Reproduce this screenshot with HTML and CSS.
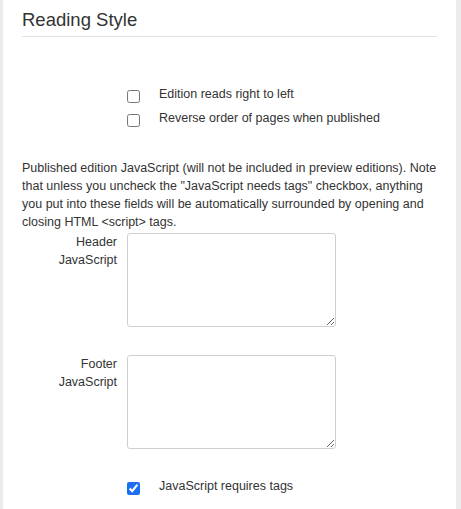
FILE: index.html
```html
<!DOCTYPE html>
<html>
<head>
<meta charset="utf-8">
<link rel="stylesheet" href="styles.css">
</head>
<body>
<div class="panel">
  <h3 class="title">Reading Style</h3>
  <div class="checks">
    <div class="check-row"><input type="checkbox" class="cb"><label class="cb-label">Edition reads right to left</label></div>
    <div class="check-row"><input type="checkbox" class="cb"><label class="cb-label">Reverse order of pages when published</label></div>
  </div>
  <p class="note">Published edition JavaScript (will not be included in preview editions). Note that unless you uncheck the "JavaScript needs tags" checkbox, anything you put into these fields will be automatically surrounded by opening and closing HTML &lt;script&gt; tags.</p>
  <div class="field">
    <label class="field-label">Header JavaScript</label>
    <textarea class="ta"></textarea>
  </div>
  <div class="field field-footer">
    <label class="field-label">Footer JavaScript</label>
    <textarea class="ta"></textarea>
  </div>
  <div class="checks checks-last">
    <div class="check-row"><input type="checkbox" class="cb" checked><label class="cb-label">JavaScript requires tags</label></div>
  </div>
</div>
</body>
</html>
```
FILE: styles.css
```css
html, body {
  margin: 0;
  padding: 0;
}
body {
  background: #ebebeb;
  font-family: "Liberation Sans", Arial, sans-serif;
  color: #333;
  font-size: 12.5px;
  line-height: 18px;
}
.panel {
  background: #fff;
  margin: 0 5px 0 3px;
  padding: 9px 19px 0 19px;
  min-height: 100vh;
  box-sizing: border-box;
}
.title {
  margin: 0;
  font-size: 18.5px;
  font-weight: normal;
  line-height: 22px;
  padding-bottom: 5px;
  border-bottom: 1px solid #e3e3e3;
  color: #333;
}
.checks {
  margin-top: 47px;
  padding-left: 105px;
}
.check-row {
  display: flex;
  align-items: flex-start;
  height: 24px;
}
.cb {
  width: 13px;
  height: 13px;
  margin: 6px 0 0 0;
  accent-color: #1c6ef2;
  flex: none;
}
.cb-label {
  margin-left: 19px;
  padding-top: 1px;
  line-height: 18px;
}
.note {
  margin: 27px 0 0 0;
  line-height: 18px;
}
.field {
  display: grid;
  grid-template-columns: 95px 209px;
  column-gap: 10px;
  margin-top: 0;
}
.field-footer {
  margin-top: 26px;
}
.field-label {
  text-align: right;
  line-height: 18px;
  padding-top: 2px;
  padding-left: 30px;
}
.ta {
  margin: 2px 0 0 0;
  width: 209px;
  height: 94px;
  box-sizing: border-box;
  border: 1px solid #cfcfcf;
  border-radius: 3px;
  padding: 4px;
  font-family: "Liberation Sans", Arial, sans-serif;
  font-size: 12.5px;
  resize: both;
}
.checks-last {
  margin-top: 27px;
}
```
